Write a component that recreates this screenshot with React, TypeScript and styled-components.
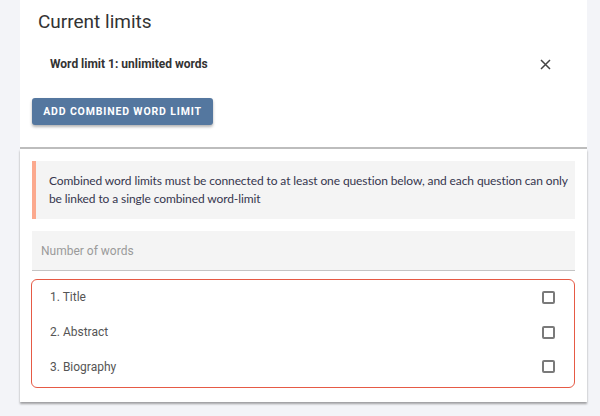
import styled, { createGlobalStyle } from "styled-components";

const Global = createGlobalStyle`
  html, body {
    margin: 0;
    padding: 0;
    background: #f3f4f8;
  }
  * {
    box-sizing: border-box;
  }
`;

const Page = styled.div`
  width: 600px;
  height: 416px;
  padding: 0 13px 0 20px;
  overflow: hidden;
`;

const Card = styled.section`
  background: #fff;
`;

const LimitsCard = styled(Card)`
  height: 149px;
  padding: 10px 12px 0 18px;
  border-bottom: 2px solid #bdbdbd;
`;

const Heading = styled.h2`
  margin: 0;
  font-family: Roboto, "Noto Sans", sans-serif;
  font-size: 19px;
  font-weight: 400;
  color: #333;
  line-height: 24px;
`;

const LimitRow = styled.div`
  display: flex;
  align-items: center;
  justify-content: space-between;
  margin-top: 19px;
  padding: 0 24px 0 12px;
  height: 22px;
`;

const LimitLabel = styled.span`
  font-family: Roboto, "Noto Sans", sans-serif;
  font-size: 12px;
  font-weight: 700;
  color: #333;
`;

const Close = styled.button`
  display: flex;
  align-items: center;
  justify-content: center;
  padding: 0;
  border: 0;
  background: none;
  width: 12px;
  height: 12px;
`;

const AddButton = styled.button`
  margin-top: 23px;
  margin-left: -6px;
  height: 27px;
  width: 181px;
  border: 0;
  border-radius: 3px;
  background: #54779f;
  color: #fff;
  font-family: Roboto, "Noto Sans", sans-serif;
  font-size: 10.5px;
  font-weight: 700;
  letter-spacing: 0.85px;
  text-transform: uppercase;
  box-shadow: 0 2px 3px rgba(0, 0, 0, 0.3);
`;

const LinksCard = styled(Card)`
  height: 253px;
  padding: 12px 12px 14px;
  display: flex;
  flex-direction: column;
  box-shadow: 0 2px 2px rgba(0, 0, 0, 0.35);
`;

const Notice = styled.div`
  background: #f4f4f4;
  border-left: 4px solid #fba98e;
  padding: 9px 6px 9px 13px;
  font-family: Lato, "Noto Sans", sans-serif;
  font-size: 12px;
  letter-spacing: -0.1px;
  line-height: 18px;
  color: #36364e;
  height: 59px;
  display: flex;
  align-items: center;
`;

const NumberInput = styled.input`
  margin-top: 12px;
  height: 40px;
  width: 100%;
  border: 0;
  border-bottom: 1px solid #c4c4c4;
  background: #f4f4f4;
  padding: 0 9px;
  font-family: Roboto, "Noto Sans", sans-serif;
  font-size: 12px;
  color: #333;
  outline: none;
  &::placeholder {
    color: #9a9a9a;
  }
`;

const Questions = styled.div`
  margin-top: 8px;
  margin-left: -1px;
  border: 1.5px solid #e65a45;
  border-radius: 6px;
  padding: 0 18px 3px;
  height: 109px;
  display: flex;
  flex-direction: column;
  justify-content: center;
`;

const Question = styled.label`
  display: flex;
  align-items: center;
  justify-content: space-between;
  height: 35.5px;
  font-family: Roboto, "Noto Sans", sans-serif;
  font-size: 12px;
  color: #555;
`;

const Box = styled.span`
  width: 13px;
  height: 13px;
  border: 2px solid #7a7a7a;
  border-radius: 2px;
  margin-right: 1px;
`;

const questions = ["1. Title", "2. Abstract", "3. Biography"];

export default function App() {
  return (
    <>
      <Global />
      <Page>
        <LimitsCard>
          <Heading>Current limits</Heading>
          <LimitRow>
            <LimitLabel>Word limit 1: unlimited words</LimitLabel>
            <Close aria-label="Remove">
              <svg width="11" height="11" viewBox="0 0 11 11">
                <path
                  d="M1 1 L10 10 M10 1 L1 10"
                  stroke="#444"
                  strokeWidth="1.5"
                />
              </svg>
            </Close>
          </LimitRow>
          <AddButton>Add combined word limit</AddButton>
        </LimitsCard>
        <LinksCard>
          <Notice>
            Combined word limits must be connected to at least one question
            below, and each question can only be linked to a single combined
            word-limit
          </Notice>
          <NumberInput placeholder="Number of words" />
          <Questions>
            {questions.map((q) => (
              <Question key={q}>
                {q}
                <Box />
              </Question>
            ))}
          </Questions>
        </LinksCard>
      </Page>
    </>
  );
}
